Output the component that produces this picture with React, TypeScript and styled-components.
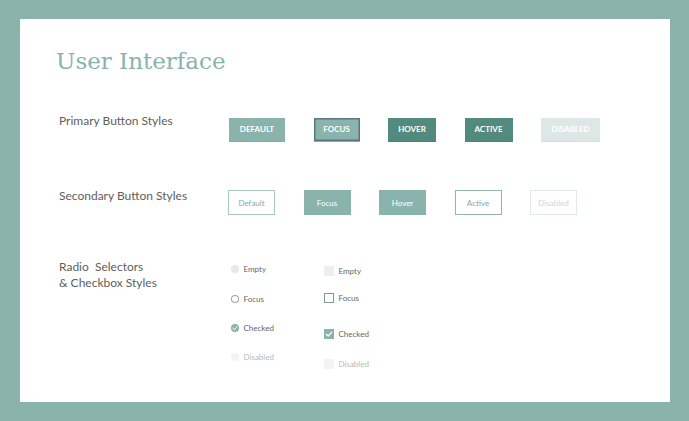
import React from "react";
import styled, { createGlobalStyle, css } from "styled-components";

const clrs = {
    teal: "#8ab3ab",
    tealDark: "#528a7e",
    tealPale: "#dde8e6",
    slate: "#5f7484",
    text: "#5e5e5e",
    muted: "#b8b8b8",
};

const GlobalStyle = createGlobalStyle`
    html, body {
        margin: 0;
        padding: 0;
        background: ${clrs.teal};
    }
    body {
        font-family: Lato, "Open Sans", sans-serif;
    }
`;

const Card = styled.main`
    margin: 19px 0 0 20px;
    width: 650px;
    height: 383px;
    box-sizing: border-box;
    padding: 28px 0 0 36px;
    background: #fff;
    display: flex;
    flex-direction: column;
`;

const Title = styled.h1`
    margin: 0;
    font-family: "DejaVu Serif", "Liberation Serif", serif;
    font-weight: normal;
    font-size: 23px;
    line-height: 28px;
    color: ${clrs.teal};
`;

const Section = styled.section<{ $top: number }>`
    margin-top: ${(p) => p.$top}px;
    display: grid;
    grid-template-columns: 173px 1fr;
    align-items: start;
`;

const SectionLabel = styled.h2`
    margin: 0;
    padding-left: 3px;
    font-size: 12px;
    line-height: 16px;
    font-weight: normal;
    color: ${clrs.text};
    white-space: pre;
`;

const ButtonRow = styled.div<{ $offset: number; $shift?: number }>`
    display: flex;
    gap: 28.5px;
    padding-top: ${(p) => p.$offset}px;
    margin-left: ${(p) => p.$shift ?? 0}px;
`;

type Variant = "default" | "focus" | "hover" | "active" | "disabled";

const primaryLook = {
    default: css`
        background: ${clrs.teal};
    `,
    focus: css`
        background: ${clrs.teal};
        box-shadow: inset 0 0 0 1.5px ${clrs.slate};
    `,
    hover: css`
        background: ${clrs.tealDark};
    `,
    active: css`
        background: ${clrs.tealDark};
    `,
    disabled: css`
        background: ${clrs.tealPale};
    `,
};

const PrimaryButton = styled.button<{ $variant: Variant; $w: number }>`
    width: ${(p) => p.$w}px;
    height: 24px;
    padding: 0;
    border: 0;
    border-bottom: 1px solid rgba(0, 0, 0, 0.04);
    font-family: Lato, sans-serif;
    font-size: 8px;
    font-weight: 700;
    color: #fff;
    text-transform: uppercase;
    display: flex;
    align-items: center;
    justify-content: center;
    ${(p) => primaryLook[p.$variant]}
`;

const secondaryLook = {
    default: css`
        background: #fff;
        border: 1px solid #a9c9c3;
        color: #7fa9a1;
    `,
    focus: css`
        background: ${clrs.teal};
        border: 1px solid ${clrs.teal};
        color: #fff;
    `,
    hover: css`
        background: ${clrs.teal};
        border: 1px solid ${clrs.teal};
        color: #fff;
    `,
    active: css`
        background: #fff;
        border: 1px solid #93b7b0;
        color: #7fa9a1;
    `,
    disabled: css`
        background: #fff;
        border: 1px solid #e0ebe9;
        color: #c6dad6;
    `,
};

const SecondaryButton = styled.button<{ $variant: Variant }>`
    width: 47px;
    height: 25px;
    box-sizing: border-box;
    padding: 0;
    font-family: Lato, sans-serif;
    font-size: 8px;
    font-weight: normal;
    display: flex;
    align-items: center;
    justify-content: center;
    ${(p) => secondaryLook[p.$variant]}
`;

const Controls = styled.div`
    display: grid;
    grid-template-columns: 93px auto;
    padding-left: 1.5px;
`;

const ControlColumn = styled.div`
    display: flex;
    flex-direction: column;
`;

const ControlItem = styled.label<{ $top: number }>`
    display: flex;
    align-items: center;
    height: 12px;
    margin-top: ${(p) => p.$top}px;
`;

const ControlText = styled.span<{ $disabled?: boolean; $gap: number }>`
    margin-left: ${(p) => p.$gap}px;
    font-size: 8px;
    color: ${(p) => (p.$disabled ? clrs.muted : "#666")};
`;

type State = "empty" | "focus" | "checked" | "disabled";

const markLook = {
    empty: css`
        background: #e8e8e8;
    `,
    focus: css`
        background: #fff;
        box-shadow: inset 0 0 0 1px #9aa3ab;
    `,
    checked: css`
        background: ${clrs.teal};
    `,
    disabled: css`
        background: #f3f3f3;
    `,
};

const RadioMark = styled.span<{ $state: State }>`
    width: 8px;
    height: 8px;
    border-radius: 50%;
    display: flex;
    align-items: center;
    justify-content: center;
    ${(p) => markLook[p.$state]}
`;

const CheckMark = styled.span<{ $state: State }>`
    width: 10px;
    height: 10px;
    display: flex;
    align-items: center;
    justify-content: center;
    ${(p) => markLook[p.$state]}
    ${(p) =>
        p.$state === "empty" &&
        css`
            background: #eeeeee;
        `}
    ${(p) =>
        p.$state === "focus" &&
        css`
            box-shadow: inset 0 0 0 1px #8592a0;
        `}
`;

const Tick = ({ size }: { size: number }) => (
    <svg width={size} height={size} viewBox="0 0 10 10">
        <path d="M2.2 5.2 L4.2 7 L7.8 3.2" fill="none" stroke="#fff" strokeWidth="1.2" strokeLinecap="round" strokeLinejoin="round" />
    </svg>
);

const primary: { label: string; variant: Variant; w: number }[] = [
    { label: "Default", variant: "default", w: 56 },
    { label: "Focus", variant: "focus", w: 46 },
    { label: "Hover", variant: "hover", w: 48 },
    { label: "Active", variant: "active", w: 48 },
    { label: "Disabled", variant: "disabled", w: 59 },
];

const secondary: { label: string; variant: Variant }[] = [
    { label: "Default", variant: "default" },
    { label: "Focus", variant: "focus" },
    { label: "Hover", variant: "hover" },
    { label: "Active", variant: "active" },
    { label: "Disabled", variant: "disabled" },
];

const radios: { label: string; state: State; top: number }[] = [
    { label: "Empty", state: "empty", top: 4 },
    { label: "Focus", state: "focus", top: 18 },
    { label: "Checked", state: "checked", top: 16.5 },
    { label: "Disabled", state: "disabled", top: 17.3 },
];

const checks: { label: string; state: State; top: number }[] = [
    { label: "Empty", state: "empty", top: 5.5 },
    { label: "Focus", state: "focus", top: 15.7 },
    { label: "Checked", state: "checked", top: 24 },
    { label: "Disabled", state: "disabled", top: 18 },
];

const App: React.FC = () => {
    return (
        <>
            <GlobalStyle />
            <Card>
                <Title>User Interface</Title>

                <Section $top={38}>
                    <SectionLabel>Primary Button Styles</SectionLabel>
                    <ButtonRow $offset={4.6}>
                        {primary.map((b) => (
                            <PrimaryButton key={b.label} $variant={b.variant} $w={b.w}>
                                {b.label}
                            </PrimaryButton>
                        ))}
                    </ButtonRow>
                </Section>

                <Section $top={46}>
                    <SectionLabel>Secondary Button Styles</SectionLabel>
                    <ButtonRow $offset={2.6} $shift={-1}>
                        {secondary.map((b) => (
                            <SecondaryButton key={b.label} $variant={b.variant}>
                                {b.label}
                            </SecondaryButton>
                        ))}
                    </ButtonRow>
                </Section>

                <Section $top={44}>
                    <SectionLabel>{"Radio  Selectors\n& Checkbox Styles"}</SectionLabel>
                    <Controls>
                        <ControlColumn>
                            {radios.map((r) => (
                                <ControlItem key={r.label} $top={r.top}>
                                    <RadioMark $state={r.state}>
                                        {r.state === "checked" && <Tick size={8} />}
                                    </RadioMark>
                                    <ControlText $gap={5} $disabled={r.state === "disabled"}>
                                        {r.label}
                                    </ControlText>
                                </ControlItem>
                            ))}
                        </ControlColumn>
                        <ControlColumn>
                            {checks.map((c) => (
                                <ControlItem key={c.label} $top={c.top}>
                                    <CheckMark $state={c.state}>
                                        {c.state === "checked" && <Tick size={10} />}
                                    </CheckMark>
                                    <ControlText $gap={5} $disabled={c.state === "disabled"}>
                                        {c.label}
                                    </ControlText>
                                </ControlItem>
                            ))}
                        </ControlColumn>
                    </Controls>
                </Section>
            </Card>
        </>
    );
};

export default App;
